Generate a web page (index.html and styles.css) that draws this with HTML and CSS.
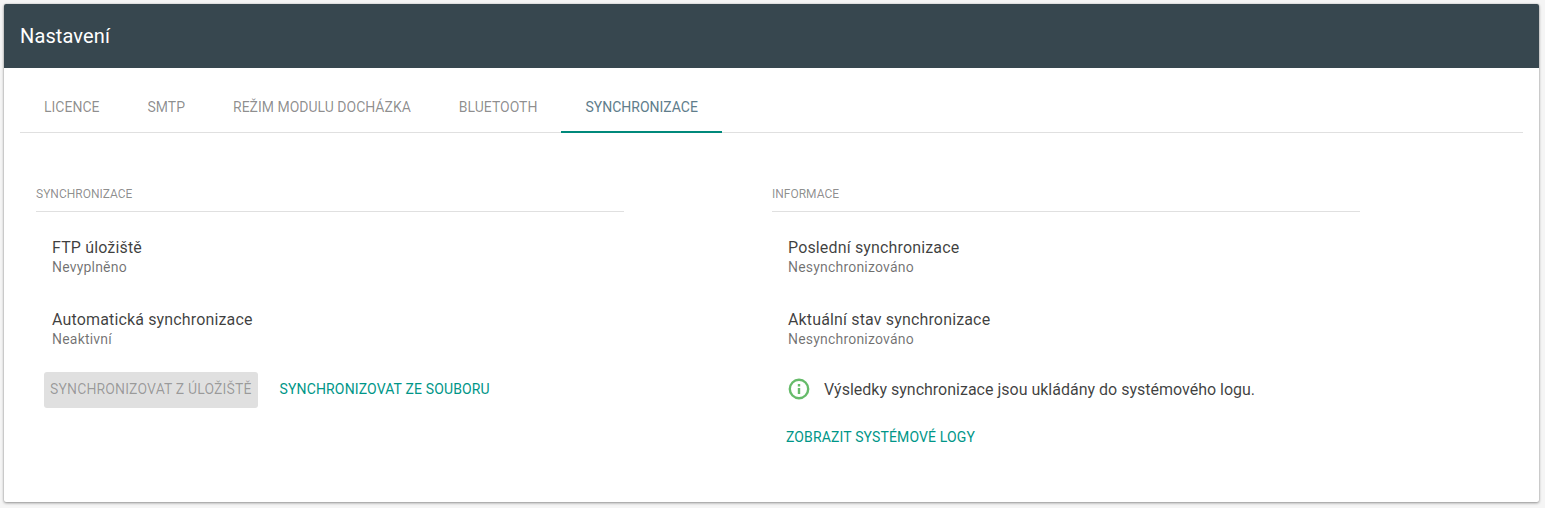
FILE: index.html
```html
<!DOCTYPE html>
<html lang="cs">
<head>
<meta charset="utf-8">
<title>Nastavení</title>
<link rel="stylesheet" href="styles.css">
</head>
<body>
<main class="card">
  <header class="toolbar">Nastavení</header>
  <div class="card-body">
    <nav class="tabs">
      <a class="tab">LICENCE</a>
      <a class="tab">SMTP</a>
      <a class="tab">REŽIM MODULU DOCHÁZKA</a>
      <a class="tab">BLUETOOTH</a>
      <a class="tab active">SYNCHRONIZACE</a>
    </nav>
    <div class="columns">
      <section class="column">
        <h2 class="section-title">SYNCHRONIZACE</h2>
        <div class="field">
          <div class="field-label">FTP úložiště</div>
          <div class="field-value">Nevyplněno</div>
        </div>
        <div class="field">
          <div class="field-label">Automatická synchronizace</div>
          <div class="field-value">Neaktivní</div>
        </div>
        <div class="actions">
          <button class="btn btn-disabled" disabled>SYNCHRONIZOVAT Z ÚLOŽIŠTĚ</button>
          <button class="btn btn-link">SYNCHRONIZOVAT ZE SOUBORU</button>
        </div>
      </section>
      <section class="column">
        <h2 class="section-title">INFORMACE</h2>
        <div class="field">
          <div class="field-label">Poslední synchronizace</div>
          <div class="field-value">Nesynchronizováno</div>
        </div>
        <div class="field">
          <div class="field-label">Aktuální stav synchronizace</div>
          <div class="field-value">Nesynchronizováno</div>
        </div>
        <div class="info">
          <svg class="info-icon" viewBox="0 0 24 24" aria-hidden="true"><circle class="info-ring" cx="12" cy="12" r="9.2"/><path class="info-mark" d="M10.8 7h2.4v2.4h-2.4zm0 4h2.4v6h-2.4z"/></svg>
          <span>Výsledky synchronizace jsou ukládány do systémového logu.</span>
        </div>
        <button class="btn btn-link btn-logs">ZOBRAZIT SYSTÉMOVÉ LOGY</button>
      </section>
    </div>
  </div>
</main>
</body>
</html>
```
FILE: styles.css
```css
* { box-sizing: border-box; }
html, body { height: 100%; }
body {
  margin: 0;
  padding: 4px 6px 6px 4px;
  background: #f5f5f5;
  font-family: Roboto, "Liberation Sans", sans-serif;
  color: rgba(0, 0, 0, .76);
  overflow: hidden;
}
.card {
  height: 498px;
  background: #fff;
  border-radius: 2px;
  box-shadow: 0 1px 3px rgba(0, 0, 0, .4), 0 0 2px rgba(0, 0, 0, .14);
  overflow: hidden;
}
.toolbar {
  height: 64px;
  padding: 0 16px;
  display: flex;
  align-items: center;
  background: #37474f;
  color: #fff;
  font-size: 20px;
  font-weight: 400;
  letter-spacing: .12px;
}
.card-body { padding: 16px 16px 0; }
.tabs {
  display: flex;
  height: 49px;
  border-bottom: 1px solid #e0e0e0;
}
.tab {
  height: 47px;
  padding: 0 24px 2px;
  display: flex;
  align-items: center;
  font-size: 14px;
  color: rgba(0, 0, 0, .46);
  position: relative;
}
.tab.active { color: #607d8b; }
.tab.active::after {
  content: "";
  position: absolute;
  left: 0;
  right: 0;
  bottom: -2px;
  height: 2px;
  background: #00897b;
}
.columns {
  display: flex;
  gap: 148px;
  padding: 46px 16px 0;
}
.column { width: 588px; }
.section-title {
  margin: 0;
  height: 33px;
  padding-top: 8px;
  font-size: 12px;
  line-height: 14px;
  font-weight: 400;
  color: rgba(0, 0, 0, .46);
  border-bottom: 1px solid #e0e0e0;
}
.field {
  padding: 26px 16px 0;
  height: 72px;
}
.field-label {
  font-size: 16px;
  line-height: 20px;
  letter-spacing: .15px;
}
.field-value {
  margin-top: 1px;
  font-size: 14px;
  line-height: 16px;
  color: rgba(0, 0, 0, .56);
  letter-spacing: .2px;
}
.actions {
  display: flex;
  gap: 14px;
  padding: 16px 8px 0;
}
.btn {
  height: 36px;
  padding: 0 6px 2px;
  border: 0;
  border-radius: 3px;
  background: none;
  font: 400 14px Roboto, "Liberation Sans", sans-serif;
  letter-spacing: .14px;
  white-space: nowrap;
}
.btn-disabled { background: #e0e0e0; color: rgba(0, 0, 0, .32); }
.btn-link { color: #009688; padding: 0 8px 2px; }
.info {
  display: flex;
  align-items: center;
  gap: 13px;
  height: 36px;
  margin-top: 15px;
  padding-left: 15px;
  font-size: 16px;
}
.info-icon { width: 24px; height: 24px; flex: none; }
.info-ring { fill: none; stroke: #66bb6a; stroke-width: 2.4; }
.info-mark { fill: #66bb6a; }
.btn-logs { display: block; margin: 13px 0 0 6px; }
```
